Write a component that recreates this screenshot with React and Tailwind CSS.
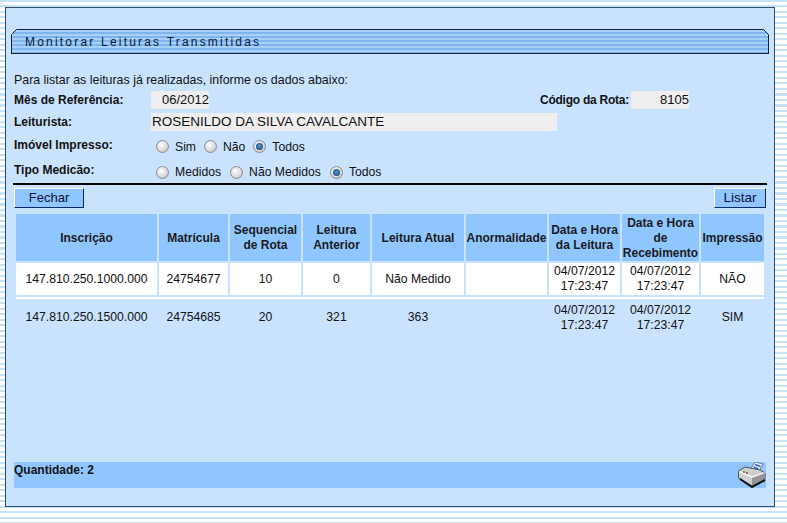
const font = "font-['Liberation_Sans',Arial,sans-serif]";

const headers = [
  ['Inscrição', 'w-[141px]'],
  ['Matrícula', 'w-[69px]'],
  ['Sequencial de Rota', 'w-[71px]'],
  ['Leitura Anterior', 'w-[67px]'],
  ['Leitura Atual', 'w-[92px]'],
  ['Anormalidade', 'w-[81px]'],
  ['Data e Hora da Leitura', 'w-[71px]'],
  ['Data e Hora de Recebimento', 'w-[77px]'],
  ['Impressão', 'w-[63px]'],
];

const rows = [
  ['147.810.250.1000.000', '24754677', '10', '0', 'Não Medido', '', '04/07/2012 17:23:47', '04/07/2012 17:23:47', 'NÃO'],
  ['147.810.250.1500.000', '24754685', '20', '321', '363', '', '04/07/2012 17:23:47', '04/07/2012 17:23:47', 'SIM'],
];

function Radio({ label, checked }) {
  return (
    <span className="flex items-center">
      <span className="flex h-[13px] w-[13px] items-center justify-center rounded-full border border-[#8c8c8c] bg-[radial-gradient(circle_at_40%_35%,#ffffff,#d8d8d8_60%,#b0b0b0)]">
        {checked && <span className="h-[7px] w-[7px] rounded-full bg-[radial-gradient(circle_at_50%_45%,#4f9be0,#0f3560)]" />}
      </span>
      <span className="ml-[6px] text-[12.2px] leading-[14px] text-[#111]">{label}</span>
    </span>
  );
}

function Printer() {
  return (
    <svg width="28" height="26" viewBox="0 0 28 26" className="shrink-0">
      <path d="M12 8 L17 0 L25 2 L19 13 Z" fill="#eef4fc" stroke="#5c6676" strokeWidth="0.8" />
      <path d="M15.5 5 L20.5 7 M14.5 7.5 L19.5 9.5 M17 2.5 L22.5 4.5" stroke="#2f5fd0" strokeWidth="1.5" />
      <path d="M0.5 9 L7 5 L22 8 L27 11 L27 17 L14 24 L0.5 16 Z" fill="#cfcfcf" stroke="#333" strokeWidth="0.8" />
      <path d="M1 9.5 L14 15 L27 11" fill="none" stroke="#f6f6f6" strokeWidth="1.4" />
      <path d="M14 16 L14 24 L27 17 L27 11 Z" fill="#959595" />
      <path d="M2 17 L14 25 L27 18" fill="none" stroke="#111" strokeWidth="2" />
      <rect x="5" y="9" width="2" height="2" fill="#4fa04f" />
      <rect x="8" y="10" width="2" height="2" fill="#c8504a" />
    </svg>
  );
}

function Corner({ className, fill, line }) {
  return (
    <svg width="6" height="6" viewBox="0 0 6 6" className={`absolute ${className}`}>
      <path d={fill} fill="#c9e3ff" />
      <path d={line} stroke="#10233c" strokeWidth="1" />
    </svg>
  );
}

function Button({ children, className }) {
  return (
    <button className={`h-[20px] border border-t-white border-l-white border-r-[#0a2a6a] border-b-[#0a2a6a] bg-[#90c6ff] leading-[16px] text-[#0a1030] ${className}`}>
      {children}
    </button>
  );
}

export default function App() {
  return (
    <div className={`${font} h-[523px] w-[787px] overflow-hidden bg-[repeating-linear-gradient(180deg,#c6e2f6_0px,#c6e2f6_2px,#ffffff_2px,#ffffff_5.5px)] pl-[5px] pt-[7px]`}>
      <div className="flex h-[500px] w-[770px] flex-col border border-[#2f4c68] bg-[#c9e3ff] pl-[5px] pt-[21px]">
        <div className="relative flex h-[25px] w-[758px] items-center border border-[#10233c] bg-[repeating-linear-gradient(180deg,#a8d0f8_0px,#a8d0f8_2px,#80b4ec_2px,#80b4ec_4px)] pl-[13px]">
          <Corner className="-left-[1px] -top-[1px]" fill="M0 6 L0 0 L6 0 Z" line="M0.5 5.5 L5.5 0.5" />
          <Corner className="-right-[1px] -top-[1px]" fill="M0 0 L6 0 L6 6 Z" line="M0.5 0.5 L5.5 5.5" />
          <span className="text-[12px] tracking-[2.2px] text-[#0a1a3a]">Monitorar Leituras Transmitidas</span>
        </div>

        <div className="flex flex-col pl-[3px]">
          <p className="mt-[19px] text-[12.4px] leading-[14px] text-[#111]">Para listar as leituras já realizadas, informe os dados abaixo:</p>

          <div className="mt-[4px] flex h-[18px] items-center">
            <span className="w-[137px] shrink-0 text-[12px] font-bold text-[#111]">Mês de Referência:</span>
            <span className="h-[18px] w-[58px] shrink-0 bg-[#efefef] pl-[11px] text-[13px] leading-[18px] text-[#111]">06/2012</span>
            <span className="ml-[331px] w-[91px] shrink-0 whitespace-nowrap text-[12px] font-bold tracking-[-0.25px] text-[#111]">Código da Rota:</span>
            <span className="h-[18px] w-[58px] shrink-0 bg-[#efefef] text-right text-[13px] leading-[18px] text-[#111]">8105</span>
          </div>

          <div className="mt-[4px] flex h-[18px] items-center">
            <span className="w-[137px] shrink-0 text-[12px] font-bold text-[#111]">Leiturista:</span>
            <span className="h-[18px] w-[406px] bg-[#efefef] pl-[1px] text-[13.5px] leading-[18px] text-[#111]">ROSENILDO DA SILVA CAVALCANTE</span>
          </div>

          <div className="mt-[5px] flex h-[18px] items-center">
            <span className="w-[142px] shrink-0 text-[12px] font-bold text-[#111]">Imóvel Impresso:</span>
            <div className="mt-[3px] flex gap-[8px]">
              <Radio label="Sim" />
              <Radio label="Não" />
              <Radio label="Todos" checked />
            </div>
          </div>

          <div className="mt-[7px] flex h-[18px] items-center">
            <span className="w-[142px] shrink-0 text-[12px] font-bold text-[#111]">Tipo Medicão:</span>
            <div className="mt-[4px] flex gap-[9px]">
              <Radio label="Medidos" />
              <Radio label="Não Medidos" />
              <Radio label="Todos" checked />
            </div>
          </div>

          <div className="-ml-[1px] mt-[4px] h-[2px] w-[754px] bg-black" />

          <div className="mt-[3px] flex w-[752px] justify-between">
            <Button className="w-[70px] text-[13px]">Fechar</Button>
            <Button className="w-[52px] text-[13.5px]">Listar</Button>
          </div>

          <table className="mt-[4px] w-[752px] table-fixed border-separate border-spacing-[2px]">
            <thead>
              <tr className="h-[47px]">
                {headers.map(([h, w]) => (
                  <th key={h} className={`${w} bg-[#90c6ff] p-0 pt-[1px] text-[12px] font-bold leading-[15px] text-[#1a1a1a]`}>
                    {h}
                  </th>
                ))}
              </tr>
            </thead>
            <tbody>
              <tr className="h-[32px]">
                {rows[0].map((c, j) => (
                  <td key={j} className="bg-white p-0 text-center text-[12.2px] leading-[15px] text-[#111]">{c}</td>
                ))}
              </tr>
              <tr className="h-[2px]">
                <td colSpan={9} className="h-[2px] bg-white p-0 text-[0px] leading-[0px]" />
              </tr>
              <tr className="h-[32px]">
                {rows[1].map((c, j) => (
                  <td key={j} className={`p-0 text-center text-[12.2px] leading-[15px] text-[#111] ${j === 6 || j === 7 ? 'pt-[1px]' : ''}`}>{c}</td>
                ))}
              </tr>
            </tbody>
          </table>

          <div className="mt-[127px] flex h-[26px] w-[752px] items-start justify-between bg-[#90c6ff]">
            <span className="mt-[1px] text-[12px] font-bold leading-[14px] text-[#111]">Quantidade: 2</span>
            <Printer />
          </div>
        </div>
      </div>
    </div>
  );
}
